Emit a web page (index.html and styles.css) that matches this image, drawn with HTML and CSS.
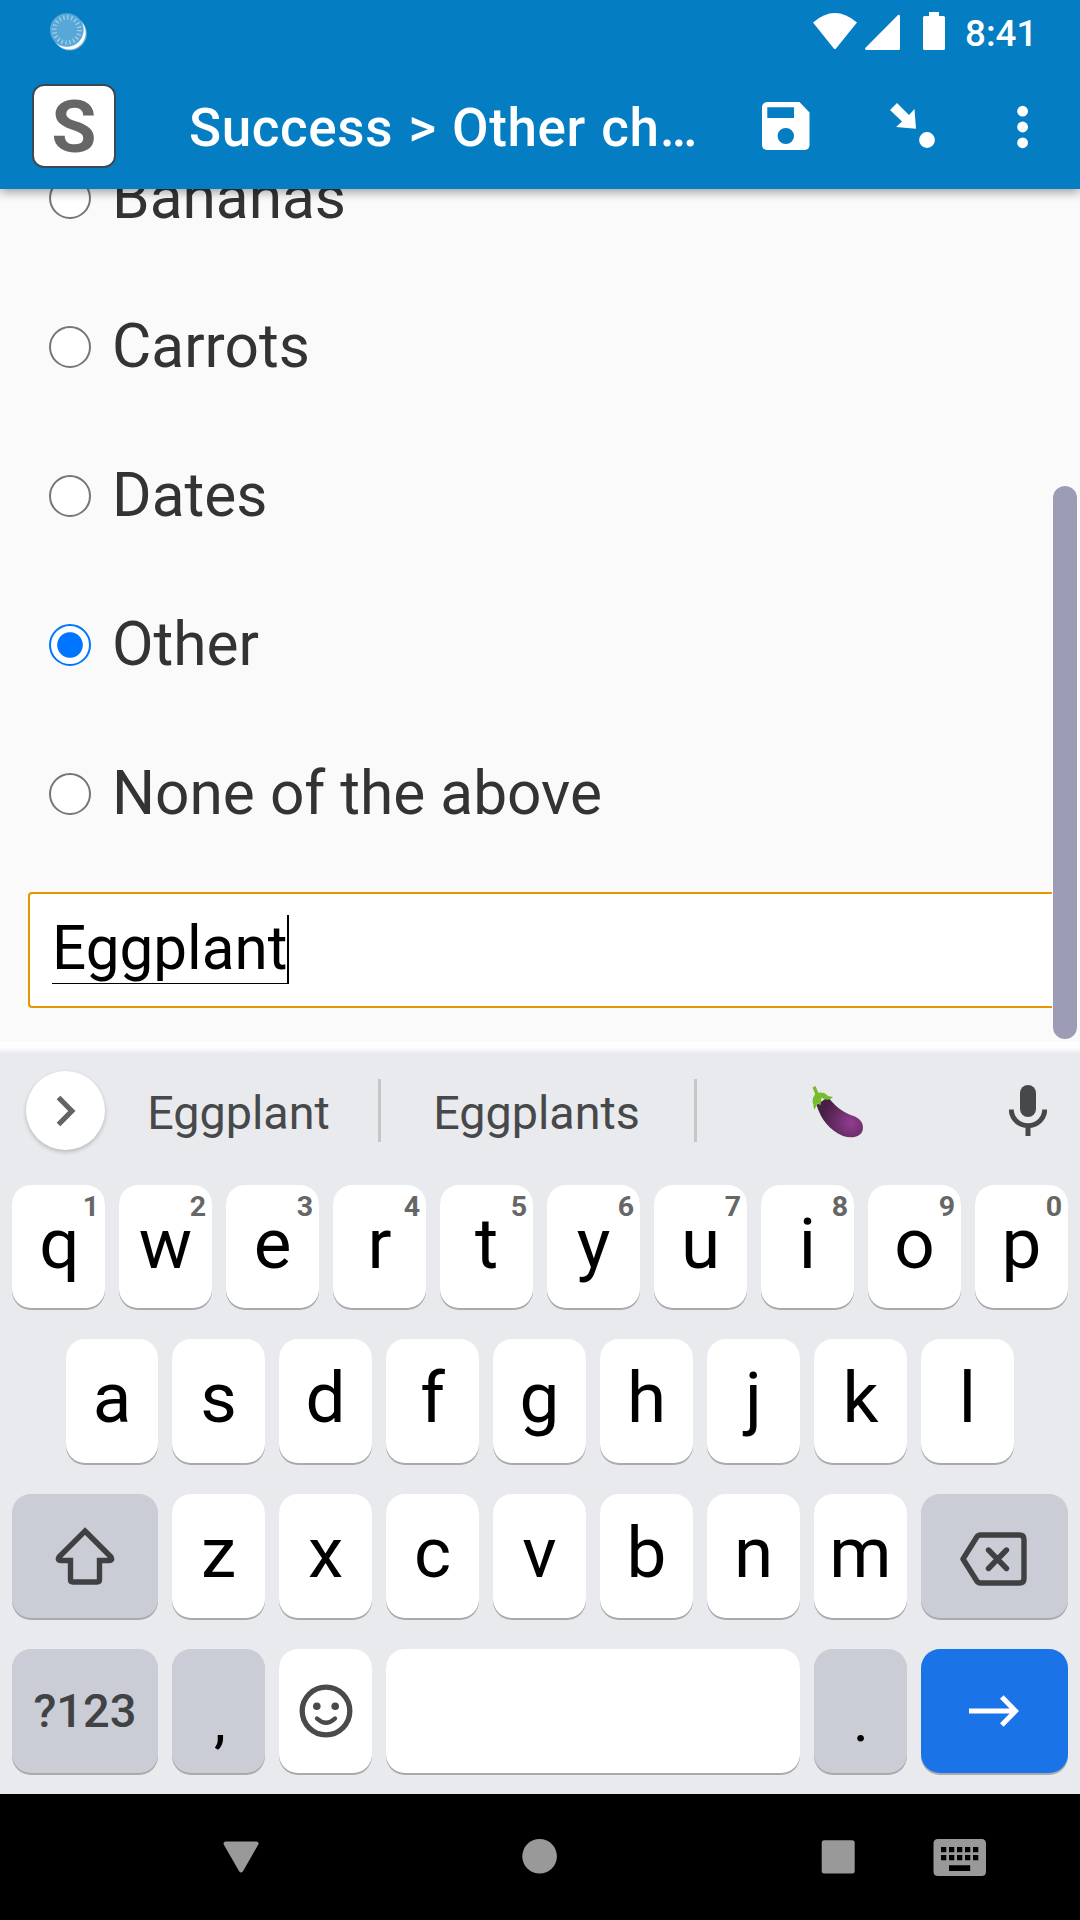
FILE: index.html
```html
<!DOCTYPE html>
<html lang="en">
<head>
<meta charset="utf-8">
<title>Success</title>
<link rel="stylesheet" href="styles.css">
</head>
<body>
<div class="screen">
  <header class="header">
    <div class="status">
      <svg class="sync" width="38" height="40" viewBox="0 0 38 40">
        <circle cx="20.800" cy="21.600" r="17" fill="#fff" opacity=".4"/>
        <circle cx="20.200" cy="20.900" r="16.500" fill="#fff"/>
        <circle cx="17.800" cy="18" r="16.800" fill="#57a7d7"/>
        <circle cx="17.800" cy="18" r="12.600" fill="none" stroke="#9fd0ec" stroke-width="4.600" stroke-dasharray="1.300 2.658"/>
      </svg>
      <svg class="signals" width="134" height="40" viewBox="812 12 134 40" fill="#fff">
        <path d="M813 22.500Q834.800 3.500 857 22.500L836 48.400Q834.900 49.600 833.800 48.400L813 22.500Z"/>
        <path d="M898 15Q900 14 900 16.500V48.500Q900 50 898.500 50H866.500Q864.300 49.400 865.500 47.700Z"/>
        <path d="M929 12h10v4h4.500q1.500 0 1.500 1.500v31q0 1.500-1.500 1.500h-19q-1.500 0-1.500-1.500v-31q0-1.500 1.500-1.500h4.500z"/>
      </svg>
      <span class="clock">8:41</span>
    </div>
    <div class="toolbar">
      <div class="logo">S</div>
      <h1 class="title">Success &gt; Other ch…</h1>
      <svg class="save" width="48" height="49" viewBox="0 0 48 49">
        <path fill="#fff" fill-rule="evenodd" d="M5 0H37.500L47.500 10.500V43.500Q47 47.500 43 48H5Q.5 47.500 0 43.500V5Q.5.5 5 0ZM5.300 5.300V16H32V5.300ZM23.800 26A8.200 8 0 1 0 23.800 42A8.200 8 0 1 0 23.800 26Z"/>
      </svg>
      <svg class="jump" width="46" height="46" viewBox="890 104 46 46" fill="#fff">
        <path d="M897 104L909 116L914.500 110L916 129.800L896 128L902 122.500L890 111Z"/>
        <circle cx="927" cy="141" r="7.900"/>
      </svg>
      <svg class="more" width="12" height="44" viewBox="0 0 12 44" fill="#fff">
        <circle cx="5.600" cy="6.200" r="5.400"/><circle cx="5.600" cy="22" r="5.400"/><circle cx="5.600" cy="37.800" r="5.400"/>
      </svg>
    </div>
  </header>

  <main class="form">
    <div class="choices">
      <label class="choice"><span class="radio"></span>Bananas</label>
      <label class="choice"><span class="radio"></span>Carrots</label>
      <label class="choice"><span class="radio"></span>Dates</label>
      <label class="choice"><span class="radio on"></span>Other</label>
      <label class="choice"><span class="radio"></span>None of the above</label>
    </div>
    <div class="answer"><span class="typed">Eggplant</span><span class="caret"></span></div>
    <div class="scrollbar"></div>
  </main>

  <section class="keyboard">
    <div class="suggestions">
      <div class="expand"><svg width="20" height="32" viewBox="0 0 20 32"><path d="M2.500 2.500L15.800 16L2.500 29.500" fill="none" stroke="#636363" stroke-width="5.200"/></svg></div>
      <span class="word first">Eggplant</span>
      <span class="divider"></span>
      <span class="word second">Eggplants</span>
      <span class="divider"></span>
      <svg class="aubergine" width="52" height="52" viewBox="0 0 52 52">
        <defs><radialGradient id="skin" cx="39" cy="37" r="30" gradientUnits="userSpaceOnUse"><stop offset="0" stop-color="#923d92"/><stop offset=".5" stop-color="#6b2d69"/><stop offset="1" stop-color="#482045"/></radialGradient></defs>
        <path d="M16 11C22 19 30 26 40 29.500C49 32 53 39 50 46C47 51.500 39 52.500 31 50C17 44 9 33 4.500 19Z" fill="url(#skin)"/>
        <path d="M.5 1.500L3.500 0L6.300 6.800Q12 5.500 16 10L21 11Q18 15 12 13L9.500 11.500L8.500 19.500L6 17L2.500 23.500Q1 21 1.500 19Q-1 14 3.200 8Z" fill="#75bd2b"/>
      </svg>
      <svg class="mic" width="38" height="51" viewBox="0 0 38 51"><rect x="11" y="0" width="16" height="32" rx="8" fill="#47484a"/><path d="M2.300 24.500a16.500 16 0 0 0 33.400 0M19 40v11" fill="none" stroke="#47484a" stroke-width="5"/></svg>
    </div>
    <div class="row top">
      <div class="key">q<sup>1</sup></div><div class="key">w<sup>2</sup></div><div class="key">e<sup>3</sup></div><div class="key">r<sup>4</sup></div><div class="key">t<sup>5</sup></div><div class="key">y<sup>6</sup></div><div class="key">u<sup>7</sup></div><div class="key">i<sup>8</sup></div><div class="key">o<sup>9</sup></div><div class="key">p<sup>0</sup></div>
    </div>
    <div class="row middle">
      <div class="key">a</div><div class="key">s</div><div class="key">d</div><div class="key">f</div><div class="key">g</div><div class="key">h</div><div class="key">j</div><div class="key">k</div><div class="key">l</div>
    </div>
    <div class="row">
      <div class="key wide gray icon shift"><svg width="60" height="58" viewBox="0 0 60 58"><path d="M30 4L56 30Q58 33.500 54 33.500H44.500V52.500Q44.500 55 42 55H18Q15.500 55 15.500 52.500V33.500H6Q2 33.500 4 30Z" fill="none" stroke="#3f4041" stroke-width="5.400"/></svg></div>
      <div class="key">z</div><div class="key">x</div><div class="key">c</div><div class="key">v</div><div class="key">b</div><div class="key">n</div><div class="key">m</div>
      <div class="key wide gray icon erase"><svg width="68" height="54" viewBox="0 0 68 54" fill="none" stroke="#3f4041" stroke-width="5.400" stroke-linejoin="round"><path d="M20.500 3H59.500Q64 3 64 7.500V46.500Q64 51 59.500 51H20.500Q18 51 16.500 48.500L3 27L16.500 5.500Q18 3 20.500 3Z"/><path d="M28.500 18L46.500 36.500M46.500 18L28.500 36.500" stroke-linecap="round"/></svg></div>
    </div>
    <div class="row">
      <div class="key wide gray mode">?123</div>
      <div class="key gray punct comma">,</div>
      <div class="key icon"><svg width="54" height="54" viewBox="0 0 54 54"><circle cx="27" cy="27" r="23.800" fill="none" stroke="#4a4a4a" stroke-width="5.300"/><circle cx="17.800" cy="22.300" r="3.800" fill="#4a4a4a"/><circle cx="36.200" cy="22.300" r="3.800" fill="#4a4a4a"/><path d="M18 34.500Q27 43 36 34.500" fill="none" stroke="#4a4a4a" stroke-width="4.400" stroke-linecap="round"/></svg></div>
      <div class="key space"></div>
      <div class="key gray punct">.</div>
      <div class="key wide icon enter"><svg width="50" height="32" viewBox="0 0 50 32"><path d="M0 16H46M32.800 2L46.500 16L32.800 30" fill="none" stroke="#fff" stroke-width="5"/></svg></div>
    </div>
  </section>

  <nav class="nav">
    <svg width="1080" height="126" viewBox="0 1794 1080 126" fill="#999">
      <path d="M225.500 1841.400H256.600Q259.800 1842 258 1845L243 1871.200Q241 1873.800 239.100 1871.200L224 1845Q222.500 1842 225.500 1841.400Z"/>
      <circle cx="539.600" cy="1856.300" r="17.300"/>
      <rect x="821.700" y="1840.200" width="33" height="33.400" rx="2.500"/>
      <path fill-rule="evenodd" d="M938 1839h43.500q4.500 0 4.500 4.500v28q0 4.500-4.500 4.500h-43.500q-4.500 0-4.500-4.500v-28q0-4.500 4.500-4.500zM941 1847v5.200h5.300v-5.200zM949 1847v5.200h5.300v-5.200zM957 1847v5.200h5.300v-5.200zM965 1847v5.200h5.300v-5.200zM973 1847v5.200h5.300v-5.200zM941 1855v5.200h5.300v-5.200zM949 1855v5.200h5.300v-5.200zM957 1855v5.200h5.300v-5.200zM965 1855v5.200h5.300v-5.200zM973 1855v5.200h5.300v-5.200zM949 1865.200v5.800h21.200v-5.800z"/>
    </svg>
  </nav>
</div>
</body>
</html>
```
FILE: styles.css
```css
* { box-sizing: border-box; }
body { margin: 0; font-family: Roboto, sans-serif; }
svg { display: block; flex: none; }
.screen { width: 1080px; height: 1920px; display: flex; flex-direction: column; overflow: hidden; background: #fafafa; }

.header { position: relative; z-index: 2; height: 189px; flex: none; background: #047dc3; color: #fff; box-shadow: 0 3px 10px rgba(0,0,0,.38); }
.status { height: 63px; display: flex; align-items: flex-start; padding: 12px 0 0 49px; }
.signals { margin-left: 725px; }
.clock { margin-left: 19px; font-size: 36.750px; line-height: 44px; font-weight: 500; }
.toolbar { height: 126px; display: flex; align-items: center; }
.logo { width: 84px; height: 84px; margin-left: 32px; border: 2.500px solid #3a4a55; border-radius: 12px; background: #fff; color: #666; font-size: 73px; font-weight: 700; line-height: 83px; text-align: center; }
.title { width: 506px; margin: 4px 0 0 73px; font-size: 53px; font-weight: 500; line-height: 62px; letter-spacing: .600px; word-spacing: 1.700px; white-space: nowrap; }
.save { margin-left: 67px; }
.jump { margin-left: 80px; }
.more { margin: 1px 0 0 81px; }

.form { position: relative; height: 853px; flex: none; padding: 0 28px; overflow: hidden; }
.choices { margin-top: -66px; }
.choice { height: 149px; display: flex; align-items: center; padding-left: 21px; gap: 21px; font-size: 60.400px; line-height: 73px; color: #333; }
.radio { width: 42px; height: 42px; border: 2.600px solid #767676; border-radius: 50%; background: #fff; }
.radio.on { border-color: #0075ff; background: radial-gradient(circle, #0075ff 12.300px, #fff 13.300px); }
.answer { height: 116px; margin-top: 24px; display: flex; align-items: center; padding: 0 0 2px 22px; border: 2px solid #e59700; border-right: 0; border-radius: 4px 0 0 4px; background: #fff; color: #000; font-size: 60.200px; }
.typed { height: 69px; line-height: 67px; border-bottom: 1px solid #000; }
.caret { width: 2px; height: 69px; background: #000; }
.scrollbar { position: absolute; left: 1053.400px; top: 297px; width: 24px; height: 553px; border-radius: 12px; background: #9c9cb6; }

.keyboard { height: 752px; flex: none; background: linear-gradient(#fff 0, #fcfcfc 6px, #f0f1f3 10px, #e8eaed 11px); }
.suggestions { height: 143px; display: flex; align-items: center; }
.expand { width: 79px; height: 79px; margin-left: 26px; margin-top: -6px; border-radius: 50%; background: #fff; display: flex; align-items: center; justify-content: center; box-shadow: 0 2px 4px rgba(0,0,0,.22); }
.word { margin-top: -2px; color: #47484a; font-size: 46.700px; line-height: 56px; text-align: center; white-space: nowrap; }
.word.first { width: 273px; padding-right: 6px; }
.word.second { width: 313px; padding-right: 2px; }
.divider { width: 3px; height: 63px; margin-top: -6px; background: #c5c6c8; }
.aubergine { margin: -3px 0 0 115px; }
.mic { margin: -6px 0 0 145px; }
.row { height: 124px; margin-bottom: 31px; padding: 0 12px; display: flex; gap: 14px; }
.row.top { height: 123px; }
.row.middle { padding: 0 66px; }
.key { position: relative; width: 93px; flex: none; display: flex; align-items: center; justify-content: center; padding-bottom: 6px; border-radius: 19px; background: #fff; box-shadow: 0 2px 0 #a9aaac; color: #000; font-size: 71px; line-height: 116px; }
.top .key:first-child { padding-left: 2px; }
.middle .key:first-child { width: 92px; }
.key sup { position: absolute; right: 6px; top: 4px; font-size: 28.500px; font-weight: 700; line-height: 36px; color: #666; }
.key.wide { width: 146px; }
.key.wide:last-child { width: 147px; }
.key.icon { padding-bottom: 1px; }
.key.shift { padding-bottom: 0; }
.key.erase { padding: 5px 2px 0 0; }
.gray { background: #cbcdd6; }
.key.mode { padding-bottom: 0; font-size: 47px; font-weight: 500; color: #414244; }
.key.punct { font-size: 60px; padding: 19px 0 0 1px; }
.key.comma { padding-left: 3px; }
.space { width: 414px; }
.key.enter { padding-right: 2px; background: #1b73e8; }
.nav { height: 126px; flex: none; background: #000; }
```
